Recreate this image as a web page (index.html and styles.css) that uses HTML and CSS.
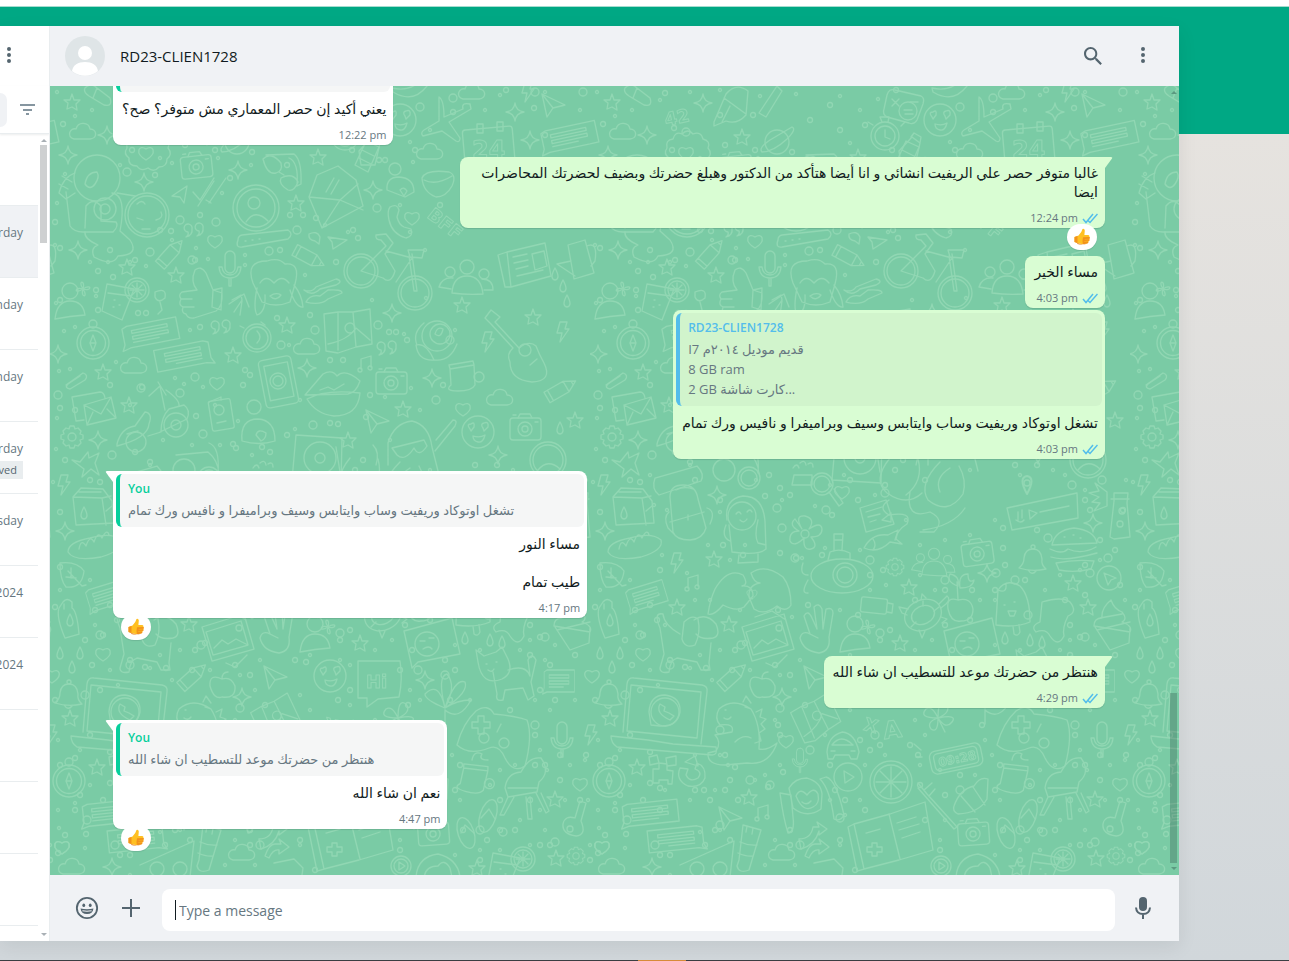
FILE: index.html
```
<!DOCTYPE html>
<html lang="en">
<head>
    <meta charset="utf-8">
    <title>WhatsApp</title>
    <link rel="stylesheet" href="styles.css">
</head>
<body>
<div class="top-strip"></div>
<div class="green-band"></div>

<div class="app">
    <!-- chat list -->
    <aside class="sidebar">
        <div class="sidebar-header">
            <button class="icon-button" aria-label="Menu">
                <svg width="24" height="24" viewBox="0 0 24 24"><path fill="currentColor" d="M12 7a2 2 0 1 0 0-4 2 2 0 0 0 0 4zm0 2a2 2 0 1 0 0 4 2 2 0 0 0 0-4zm0 6a2 2 0 1 0 0 4 2 2 0 0 0 0-4z"/></svg>
            </button>
        </div>
        <div class="sidebar-search">
            <input class="search-box" type="text" aria-label="Search">
            <button class="icon-button filter" aria-label="Filter">
                <svg width="20" height="20" viewBox="0 0 20 20"><path stroke="currentColor" stroke-width="2" d="M2 5h15M5 10h9M8 14h3"/></svg>
            </button>
        </div>
        <div class="chat-list">
            <div class="chat-row"></div>
            <div class="chat-row selected"><span>rday</span></div>
            <div class="chat-row"><span>nday</span></div>
            <div class="chat-row"><span>nday</span></div>
            <div class="chat-row"><span>rday</span><span class="chip">ved</span></div>
            <div class="chat-row"><span>sday</span></div>
            <div class="chat-row"><span>2024</span></div>
            <div class="chat-row"><span>2024</span></div>
            <div class="chat-row"></div>
            <div class="chat-row"></div>
            <div class="chat-row"></div>
            <div class="scrollbar list-scrollbar"><i class="arrow-up"></i><i class="thumb"></i><i class="arrow-down"></i></div>
        </div>
    </aside>

    <main class="chat">
        <header class="chat-header">
            <svg class="avatar" width="40" height="40" viewBox="0 0 40 40">
                <circle cx="20" cy="20" r="20" fill="#dfe5e7"/>
                <circle cx="20" cy="17" r="7" fill="#fff"/>
                <path fill="#fff" d="M7 35c1-6 6-9 13-9s12 3 13 9a20 20 0 0 1-26 0z"/>
            </svg>
            <h1>RD23-CLIEN1728</h1>
            <button class="icon-button" aria-label="Search">
                <svg width="24" height="24" viewBox="0 0 24 24"><path fill="currentColor" d="M15.900 14.300H15l-.3-.3c1-1.100 1.600-2.700 1.600-4.300 0-3.700-3-6.700-6.700-6.700S3 6 3 9.700s3 6.700 6.700 6.700c1.600 0 3.200-.6 4.300-1.600l.3.3v.8l5.100 5.100 1.500-1.500-5-5.200zm-6.200 0c-2.600 0-4.600-2.100-4.600-4.600s2.100-4.600 4.600-4.600 4.600 2.100 4.600 4.600-2 4.600-4.600 4.600z"/></svg>
            </button>
            <button class="icon-button" aria-label="Menu">
                <svg width="24" height="24" viewBox="0 0 24 24"><path fill="currentColor" d="M12 7a2 2 0 1 0 0-4 2 2 0 0 0 0 4zm0 2a2 2 0 1 0 0 4 2 2 0 0 0 0-4zm0 6a2 2 0 1 0 0 4 2 2 0 0 0 0-4z"/></svg>
            </button>
        </header>

        <section class="conversation">
            <!-- doodle wallpaper, one 540px tile repeated sideways -->
            <svg class="wallpaper" width="100%" height="100%" aria-hidden="true">
                <defs>
                    <marker id="dot1" markerUnits="userSpaceOnUse" markerWidth="8" markerHeight="8" refX="4" refY="4" viewBox="0 0 8 8"><circle class="ring" cx="4" cy="4" r="1.500"/></marker>
                    <marker id="dot2" markerUnits="userSpaceOnUse" markerWidth="10" markerHeight="10" refX="5" refY="5" viewBox="0 0 10 10"><circle class="ring" cx="5" cy="5" r="2.500"/></marker>
                    <marker id="dot3" markerUnits="userSpaceOnUse" markerWidth="12" markerHeight="12" refX="6" refY="6" viewBox="0 0 12 12"><circle class="ring" cx="6" cy="6" r="4"/></marker>
                    <g id="spark"><path d="M0-9Q1-1 9 0Q1 1 0 9Q-1 1-9 0Q-1-1 0-9Z"/></g>
                    <g id="star"><path d="M0-8L2-2L8-2L4 2L5 8L0 5L-5 7L-4 1L-8-2L-2-2Z"/></g>
                    <g id="heart"><path d="M0 7C-12 0-7-9 0-4C7-9 12 0 0 7Z"/></g>
                    <g id="drop"><path d="M0-6Q6 5 0 6Q-6 5 0-6Z"/></g>
                    <g id="bolt"><path d="M-3-10H4L2-3H6L-3 10L-1 1H-6Z"/></g>
                    <g id="cloud"><path d="M-9 7C-17 5-13-5-7-3C-5-11 6-10 7-3C14-3 15 6 7 7Z"/></g>
                    <g id="cross"><path d="M0 0C-6-9 3-9 0 0C9-6 9 3 0 0C6 9-3 9 0 0C-9 6-9-3 0 0Z"/></g>
                    <g id="quote"><path d="M-3-2a4 4 0 1 0-4 3q1 3-2 5q7-2 6-8ZM8-3a4 4 0 1 0-4 3q1 3-2 5q7-2 6-8Z"/></g>
                    <g id="note"><path d="M-5 5V-5L5-8V3"/><circle cx="-6" cy="6" r="2"/><circle cx="4" cy="4" r="2"/></g>
                    <g id="gear"><circle r="4"/><path d="M-3-8L-2-11H2L3-8L6-9L9-6L8-3L11-2V2L8 3L9 6L6 9L3 8L2 11H-2L-3 8L-6 9L-9 6L-8 3L-11 2V-2L-8-3L-9-6L-6-9Z"/></g>
                    <g id="camera"><rect x="-15" y="-10" width="31" height="22" rx="3"/><path d="M-7-10L-5-14H5L7-10M10-6H13M-12-13H-9"/><circle cy="1" r="7"/><circle cy="1" r="3"/></g>
                    <g id="compass"><circle r="16"/><circle r="12.500"/><circle cy="-19" r="4"/><path d="M0-8L3 0L0 8L-3 0ZM-3 0H3"/></g>
                    <g id="bubble"><path d="M-22-10H28V12H-22L-30 14L-27 8V-8Z"/><path d="M-18-5H18v3H-18ZM-18 1H18v3H-18ZM-18 7H8"/></g>
                    <g id="pencil"><path d="M-15-6H7L18 0L7 6H-15ZM-11-6V6M7-6V6M14-2V2"/></g>
                    <g id="mic"><rect x="-5" y="-17" width="10" height="22" rx="5"/><path d="M-11-1q1 11 11 11t11-11h-3q-1 8-8 8t-8-8ZM-1 10V18H1V10"/></g>
                    <g id="person"><circle cy="-13" r="8"/><path d="M-15 15Q-13-3 0-3T15 11Q0 12-15 15Z"/></g>
                    <g id="people"><circle cy="-14" r="7"/><path d="M-15 12Q-14-5 0-5T16 13Q0 14-15 12Z"/><circle cx="-17" cy="-9" r="5"/><circle cx="17" cy="-7" r="5"/><path d="M-16 8L-28 6Q-25-4-14-3M15-2Q26-2 26 9L17 9"/></g>
                    <g id="plane"><path d="M-11-11L12 0L0 3L-6 12ZM-11-11L0 3"/></g>
                    <g id="bell"><path d="M-13 8Q-8 4-8-2Q-7-11 1-11T10-1Q9 5 14 9Q0 12-13 8ZM-4 10q4 6 8 1"/><circle cx="1" cy="-13" r="2"/></g>
                    <g id="citrus"><circle r="12"/><circle r="9"/><path d="M0-7V7M-7 0H7M-5-5L5 5M5-5L-5 5"/></g>
                    <g id="drink"><path d="M-19-13L8-8L-4 23L-24 14ZM-18-4L5-1M-12 3h1M-7 8h1M-13 10h1"/><use href="#citrus" x="11" y="-7"/></g>
                    <g id="face"><circle r="16"/><path d="M-8-3q-4-5 1-5q4-3 3 3l-3 4ZM5-4q-3-4 1-5q5-2 4 4l-4 4ZM-5 4Q2 6 7 3Q5 11 0 10T-5 4Z"/></g>
                    <g id="map"><path d="M-24-16L-10-18L5-18L22-21L24 14L8 17L-10 23L-22 21ZM-10-18V20M5-18L8 17"/><path d="M-20 14Q0 10 8-2L22 10"/><circle r="5" cx="2" cy="-2"/></g>
                    <g id="mug"><path d="M-12-8L12-12L13 8Q10 14-4 14T-11 8ZM-12-8L-13-12L11-16L12-12"/><circle cx="17" cy="0" r="5"/></g>

                    <g id="doodles">
                        <!-- first band -->
                        <use href="#star" x="72" y="102"/><use href="#cloud" x="83" y="132"/><use href="#spark" x="107" y="135"/>
                        <path d="M85 88q6-6 12 0l13 10q3 9-6 7l-15-9q-6-4-4-8ZM97 88l-4 10"/>
                        <text x="124" y="124" transform="rotate(-12 135 115)">42</text>
                        <use href="#spark" x="163" y="103"/><use href="#star" x="202" y="137"/>
                        <path d="M174 122l12-28q10-12 22-3l-2 24q-9 10-20 6l-12 5ZM184 98l22 16M190 106l-8 16M219 113l18-27 5 5-16 26Z"/>
                        <circle cx="237" cy="142" r="12"/><path d="M222 152q-4-4 8-12l22-13q5 2-5 12-14 13-25 13Z"/>
                        <path d="M127 148q-2-8 6-9 2-8 9-5 6-6 11 0 8-3 10 5 8 2 5 9 5 6-1 11 0 8-8 8-5 6-11 1-7 4-11-2-9 0-8-8-6-4-2-10Z"/><use href="#heart" x="146" y="153"/>
                        <path d="M347 95q2-7 8-5l26 6q4 2 2 8l-6 16q-3 5-8 3l-22-6q-5-3-3-8ZM352 99l7 7m0-7l-7 7M370 102h8"/><circle cx="368" cy="111" r="9"/><path d="M364 110h8M365 114h8"/>
                        <path d="M392 88q17 4 28-7l7 5q-14 18-34 6Z"/>
                        <circle cx="345" cy="136" r="14"/><circle cx="345" cy="136" r="10"/><path d="M345 130v7l5 2M342 122l-2-5h9l-1 5M333 125l-5-3M361 126l4-4"/>
                        <path d="M372 137l8 6-5 22h-14l-2-14ZM371 137l3-4 7 4-1 6"/>
                        <use href="#face" x="400" y="120"/>
                        <path d="M439 97q5 3 5 20l19-8q-2-7 7-5l1 5-22 13 11 16q0 5-4 3l-14-10-19 5q-3-3 1-6l15-9Z"/>
                        <use href="#cloud" x="472" y="92"/><use href="#bolt" x="528" y="92"/><use href="#spark" x="515" y="112"/><use href="#spark" x="530" y="140"/><use href="#plane" x="553" y="105"/>
                        <rect x="464" y="128" width="50" height="46" rx="3" transform="rotate(-5 489 150)"/><path d="M477 124h6v9h-6ZM497 122h6v9h-6Z"/><text x="472" y="158" class="big">24</text>
                        <use href="#bubble" transform="translate(569 136) rotate(-12)"/>
                        <use href="#cloud" x="430" y="152"/>

                        <!-- astronaut and moon -->
                        <circle cx="97" cy="178" r="23"/><path d="M85 184q2-12 12-12 3 5-2 12-5 7-10 0ZM75 173q-12 4-16 20l7 6 9-6M62 176l10 6M59 184l9 5M66 192l4 34q4 6 13 6h30q6-6 3-10l-15-1v-15q-8-9-15 0l-1 22"/>
                        <circle cx="105" cy="209" r="11"/><circle cx="105" cy="209" r="5"/><path d="M112 193q15 2 8 38l10 9q10 15-12 16-5 11-24 1-4-9 4-12-14-6-13-13M117 193l18 3"/>
                        <circle cx="147" cy="215" r="22"/><circle cx="147" cy="215" r="19"/><path d="M137 204q5-5 8 0M142 229h8M156 220q8-2 5-8M137 218l6 2"/>
                        <use href="#spark" x="68" y="155"/><use href="#spark" x="144" y="182"/><use href="#camera" transform="translate(196 166) rotate(-6)"/>
                        <use href="#spark" x="238" y="170"/><use href="#star" x="318" y="157"/>
                        <path d="M263 159q8-8 18 4 2 8-5 10-9 2-13-14ZM281 178q12-6 17 4-4 10-10 8-10-6-7-12ZM279 172l5 3M266 155l28-1q8 6 7 30l-4 2q2-24-8-28"/>
                        <path d="M172 196l15-10-3 17-4-6ZM193 192l7 8 14-22M198 206l16-25M209 203l17-25M206 200l5 3"/>
                        <circle cx="256" cy="208" r="23"/><circle cx="256" cy="208" r="19"/><circle cx="254" cy="203" r="6"/><path d="M246 222q9-14 22-1"/>
                        <use href="#star" x="296" y="203"/><path d="M309 197l8-22 21-9 18 14 7 26-41 22ZM309 197l31 3 18-16M340 200l23 10M340 200l-18 28M326 192l8-14M331 194l8-14"/>
                        <use href="#spark" x="373" y="190"/><circle cx="395" cy="169" r="6"/><path d="M387 190q-1-13 12-13 15 1 15 15l-9 5ZM400 190q4-4 7 1l-3 5Z"/>
                        <path d="M355 165l11-24 13 6-11 25ZM362 150l12 6M359 158l12 6"/>
                        <path d="M422 178q4-9 27-6 8 3 3 14-6 11-16 11-13-5-14-19ZM424 180q12 6 28-4"/>
                        <text x="430" y="218" transform="rotate(38 430 212)">BFF</text>
                        <path d="M390 207q7-4 9 3l-2 7q2 8 7 10l7 2q3 7-5 9-14-4-17-18-2-9 1-13Z"/><use href="#heart" x="412" y="218"/>
                        <use href="#quote" x="195" y="231"/><use href="#heart" x="215" y="241"/>
                        <path d="M238 240q-3 8 4 7l46-8q6-5 0-9l-46 5q-4 1-4 5ZM245 241h1M252 240h1M259 239h1"/>
                        <path d="M309 234q8-4 11 3l-1 7-4-3q-7-1-6-7Z"/><path d="M328 237l19 3-14 9-1-7Z"/>
                        <use href="#pencil" transform="translate(170 254) rotate(-48)"/><use href="#pencil" transform="translate(308 257) rotate(28)"/>
                        <use href="#spark" x="78" y="250"/><use href="#star" x="127" y="267"/><use href="#star" x="176" y="275"/><use href="#mic" x="230" y="268"/>

                        <!-- monkey, thumb, bike -->
                        <path d="M253 283q-8-22 14-22 12-4 18 3 16-2 10 20l-5 18q-14 6-28 0ZM260 283q6-9 14 0 8-9 15 0M270 296q6-4 11-1-5 7-11 1ZM257 288q-4 20 0 27 9-3 8-20M290 290q6 18 13 17-1-12-9-22"/>
                        <path d="M195 270q-5 12 2 20l-15 2q-4 3-1 7-3 6 2 8-2 6 3 7 2 5 8 4l22-7q7-5 6-18l-9-3-7-17q-5-8-11-3ZM213 290l9-2-1 22-9-3ZM181 299h11M183 307h11"/>
                        <circle cx="361" cy="271" r="17"/><circle cx="361" cy="271" r="14"/><circle cx="415" cy="293" r="17"/><circle cx="415" cy="293" r="14"/>
                        <path d="M361 271l25-25-5-6q-6 0-5-5l10-1 7 9-8 11 10 17q-4 14-12 7ZM386 251l26 7-16 24M409 256l5 35h3l-5-37M408 250h16l-2 8-12-1Z"/>
                        <use href="#people" x="467" y="281"/>
                        <path d="M507 252l38-9 6 33-40 11ZM507 252l-9 3 7 32 6 0M513 257l14-3M514 263l14-3M516 269l12-3M532 254l12-3 3 15-12 4ZM517 276l26-6"/>
                        <path d="M568 245l17-5 9 33-20 6ZM571 261l-14 3 18 12M587 246q11-5 8 15l-4 5"/>
                        <use href="#drop" x="555" y="274"/><use href="#drop" x="563" y="286"/><use href="#drop" x="567" y="301"/>
                        <use href="#drink" x="126" y="297"/><use href="#cross" x="83" y="289"/><use href="#person" x="70" y="304"/>
                        <path d="M155 292q12-5 10 6-7 6-10-1ZM160 302l2 8-4 4"/>
                        <path d="M229 304l15-10 5 13M232 300l9-5 1 5-8 12M240 315l2-14"/>
                        <path d="M304 290q8 3 12-3l20-8q8 2 0 6l-16 4q-8 8-16 1ZM306 302q4-8 14-6l8-6q14-1 14 3l-14 6q-8 7-22 3Z"/>
                        <use href="#map" x="348" y="330"/><use href="#spark" x="392" y="313"/><use href="#star" x="462" y="305"/><use href="#star" x="533" y="317"/><use href="#bolt" x="563" y="332"/><use href="#bolt" x="488" y="342"/>
                        <use href="#bubble" transform="translate(150 332) rotate(-11)"/><use href="#bubble" transform="translate(183 355) scale(-1 1) rotate(11)"/>
                        <use href="#compass" x="93" y="343"/><use href="#quote" x="222" y="328"/><circle cx="257" cy="338" r="14"/><circle cx="257" cy="338" r="11"/><path d="M257 331q6 6 0 12M261 322l4 3M244 328l-4-2"/>
                        <use href="#star" x="287" y="325"/><use href="#cloud" x="307" y="347"/><use href="#star" x="233" y="355"/><use href="#cloud" x="134" y="366"/><use href="#star" x="103" y="372"/>
                        <path d="M66 385l17-12q6 2 2 7l-15 9q-6-1-2-5l12-8"/><use href="#spark" x="58" y="354"/>
                        <rect x="262" y="358" width="33" height="48" rx="4" transform="rotate(-11 278 382)"/><rect x="267" y="364" width="24" height="35" transform="rotate(-11 278 382)"/><circle cx="278" cy="381" r="8"/><circle cx="278" cy="381" r="5"/>
                        <use href="#spark" x="307" y="368"/><path d="M305 395l18-21q9-5 14 2 8-8 23 5-4 12-12 13ZM307 399q18-10 53-6-2 23-26 23-18-2-27-17ZM320 390l8-3 6 3 10-6"/>
                        <use href="#note" x="366" y="364"/><use href="#quote" x="388" y="349"/><use href="#camera" x="391" y="382"/><use href="#spark" x="432" y="378"/><use href="#mug" x="462" y="377"/>
                        <circle cx="437" cy="336" r="15"/><circle cx="440" cy="334" r="10"/><path d="M435 334q2-8 8-5-2 10-8 5ZM416 345q10-3 18 15-16 1-18-15ZM424 323q-12 10-7 22M434 360q16 2 23-16"/>
                        <path d="M485 318l6-8 9 7-5 5 24 26q10-8 17-2 3 8 8 17 9 18-12 19-22-2-22-20-4-8 3-14l-22-24Z"/><circle cx="525" cy="350" r="6"/><path d="M530 365l7-6"/>
                        <use href="#heart" x="217" y="383"/>

                        <!-- scooter band -->
                        <path d="M72 397l28-5q4 0 5 6M72 397l4 24 8-1M84 405l27-8 5 21-29 7ZM84 405l17 9 10-17M93 412l-6 13M107 409l9 9"/><use href="#star" x="129" y="405"/>
                        <path d="M117 444q4-16 18-18l10-14q8 1 4 12-1 14-32 22ZM148 436l13-4q0-15 8-23l15-4q7 5 3 14l-27 13M165 410l-5-24-11 10M158 382l8 13M166 390q14 10 13 16"/><circle cx="176" cy="425" r="12"/><circle cx="176" cy="425" r="5"/><circle cx="136" cy="442" r="10"/><path d="M127 434l11-3"/>
                        <rect x="210" y="400" width="22" height="30" rx="2" transform="rotate(-9 220 413)"/><circle cx="219" cy="410" r="5"/><path d="M217 423l9-2M209 402l12-5v3"/>
                        <circle cx="254" cy="407" r="7"/><path d="M242 441q-2-22 16-22 17 1 17 22-16 5-33 0ZM256 435q2-7 10-2 0 6-5 8Z"/>
                        <use href="#star" x="403" y="409"/><use href="#plane" x="377" y="421"/><use href="#gear" x="72" y="437"/><use href="#spark" x="98" y="440"/><use href="#star" x="348" y="440"/>
                        <path d="M88 452l-8 10-8-2 12 9-2 8 9-8 8 6-4-12 4-10-10 5Z"/>
                        <path d="M296 435l46 3-1 45-49-3Z"/><circle cx="320" cy="458" r="16"/><circle cx="320" cy="458" r="5"/><path d="M336 447l4 25"/>
                        <path d="M388 465v-22q6-20 24-22 17 4 20 26l6 24M392 448l32-8 3 6q-8 12-13 2-9 14-17 7ZM436 440l17-20q5 0 2 6l-20 25M373 445q7 7 3 20"/>
                        <path d="M176 455l32-3q10 8 11 22M209 443q11 4 9 30"/><circle cx="184" cy="470" r="11"/><circle cx="209" cy="478" r="11"/><circle cx="209" cy="478" r="8"/>
                        <use href="#cloud" x="500" y="398"/><use href="#pencil" transform="translate(560 390) rotate(-30)"/><use href="#star" x="575" y="420"/><use href="#face" x="478" y="432"/><use href="#camera" x="525" y="428"/><use href="#heart" x="463" y="409"/><use href="#spark" x="498" y="455"/><use href="#drop" x="560" y="428"/>
                        <path d="M253 468q4-6 6 0M260 463q5-4 6 2M268 464q5-3 5 3M254 475h18v10h-20Z"/><circle cx="282" cy="484" r="11"/><circle cx="282" cy="484" r="8"/><path d="M289 492l10 14 4-3-9-14"/>
                        <path d="M350 458q-18 22-3 35 20 14 35 0M366 495q18-14 12-36M349 500q-12 8 0 15 24-4 18 9-10 6-12 16M370 492q-5 28 20 20 16 8 4 20h-14M400 462q-22 22-12 38 20 16 35-6 4-14-4-28M410 468q-16 10-10 24M425 508q-12 18-42 22"/>
                        <use href="#drop" transform="translate(487 485) rotate(180) scale(1.500)"/><circle cx="487" cy="483" r="3"/>
                        <circle cx="548" cy="460" r="18"/><circle cx="548" cy="460" r="15"/><path d="M538 470q10-12 22-1"/>

                        <!-- backpack band -->
                        <use href="#bolt" x="64" y="485"/><path d="M73 497l8-9 22 1 9 12 2 22-38 2ZM73 497l29 1 4 27M102 498l9-2M79 492h22M106 511l6-5"/><use href="#drop" x="84" y="513"/>
                        <path d="M115 478l42-12q8 8 4 15l-42 14q-8-6-4-17Z"/><path d="M130 497q0-12 13-12t15 14l8 29q-3 11-16 12-14 0-17-8ZM130 522l34-10M129 512q-6 5-1 16l6 6M167 508q9 3 3 16M148 515v5M136 490q8-4 17-1"/>
                        <circle cx="202" cy="516" r="14"/><path d="M187 520q-3-21 16-24 20 0 22 25l1 28q-8 7-34 3l-3-27M196 514q3-4 5 0M207 512q3-4 5 0M200 520q4 4 7-1M186 525q-5 12 4 16M199 555l-1 8 20-1v-8M218 520q-4 16 0 23l8 2"/>
                        <use href="#spark" x="177" y="495"/><use href="#heart" x="302" y="492"/><use href="#spark" x="65" y="531"/>
                        <path d="M68 552q0-10 22-14 22-6 31 2 3 10-20 17-27 5-33-5ZM79 549q2-11 7-3 4-12 8-4 4-12 8-4 5-10 7-3"/>
                        <circle cx="265" cy="534" r="4"/><path d="M262 529q-8-14 3-13 11 3 4 13 12-8 13 0 0 8-11 8 8 10 0 12-8 2-7-11-10 10-14 3-1-10 9-10-11-6-4-12Z"/>
                        <ellipse cx="302" cy="576" rx="31" ry="17"/><circle cx="305" cy="575" r="12"/><circle cx="305" cy="575" r="8"/><path d="M288 560l2-8q10-4 20 1v6M294 551v-17h9l-1 16M294 540h8M268 575q-9 0-5-12M268 580q-8 14 0 13"/>
                        <path d="M324 548q8-15 24-13l10-5-2 9 6 5-12-2q-12 12-26 6ZM333 539q4 6 0 11"/><path d="M320 508l26-8 8 24-28 8ZM326 512l16-5M328 517l12-3M330 522l6-2M342 520l9-7v9Z"/>
                        <use href="#gear" transform="translate(355 567) scale(.8)"/><use href="#people" transform="translate(394 565) scale(.8)"/><use href="#star" x="369" y="587"/><use href="#camera" transform="translate(437 553) rotate(-8)"/>
                        <path d="M467 508l70-15 1 25-66 12ZM489 510l8 3-7 6ZM500 512l29-6M478 512v9M482 510v8M476 520q5 4 8 0"/>
                        <use href="#bell" x="492" y="560"/><path d="M512 545q3-15 22-17 20 2 23 15ZM510 549q12 6 18 0 14 6 28-2M511 557q14 5 46-4M516 563q20-4 38-2l-3 8q-16 4-32 1ZM524 537h1M533 535h1M540 538h1"/>
                        <use href="#spark" x="553" y="523"/><path d="M574 493h14l-1 10 3 34-16 2-4-2 4-36ZM571 499h18M555 483l12 9v14l-13 5 6-8-8-1 7-5-10-4 10-2Z"/><circle cx="582" cy="511" r="3"/><circle cx="580" cy="524" r="3"/>
                        <use href="#bolt" x="137" y="563"/><use href="#star" x="174" y="559"/><path d="M60 563q17-2 24 8-2 18-18 16-6-7-6-24ZM68 571l14 15 4-1M71 568v10M66 577l10 1"/>
                        <use href="#bubble" transform="translate(106 595) rotate(-17) scale(.7 1)"/><use href="#note" x="153" y="583"/><use href="#star" x="137" y="607"/>
                        <path d="M204 607q-8 5-21-2-9 11-15 9 2-14 7-25 13-22 28-14 6 10-1 11 11-1 11 10ZM214 609q10 7 23-3 9 7 14-1 0-18-8-28-18-14-32-4 3 10 9 10-12 2-11 14Z"/><use href="#heart" transform="translate(212 594) scale(.7)"/>
                        <path d="M63 602q4-5 9 0v6q5 3 7 26l-14 4q-9-21-6-30ZM64 604v5"/><use href="#drop" x="70" y="620"/>
                        <path d="M154 620q12-8 22 4 5 12-3 14-12 2-17-4M144 622q8-8 14-3 3 14-3 26-10 4-13-6ZM140 634q-16-9-17-20-10-2-3 14l4 26-4 14q0 6 9 4 1-12 8-14l20 4 4 8h9l-1-7 2-20"/>
                        <use href="#star" x="189" y="624"/><path d="M202 627l42-13 10 35-42 12ZM206 632l35-11 7 24-35 10ZM214 648l8-8 6 4 8-5 12 6M215 617l17-6 14 9M247 655l-12 12-9-4"/><circle cx="239" cy="628" r="3"/>
                        <path d="M270 634l-6-18q4-7 8 2l5 11-3-22q5-5 8 2l1 20 3-20q7-2 7 4l-4 24q2 14-10 16-16-2-19-15 2-8 10-4l8 4"/>
                        <use href="#person" x="315" y="637"/><use href="#cross" x="328" y="627"/><use href="#star" x="360" y="643"/>
                        <ellipse cx="383" cy="615" rx="19" ry="15" transform="rotate(-25 383 615)"/><ellipse cx="383" cy="615" rx="12" ry="9" transform="rotate(-25 383 615)"/><path d="M399 604l8-8q4 3-1 8l-5 4M368 609l-9-2 3 6 5 2M379 630l3 8 3-7M381 600l1-6 4 4M401 617l6 2-5 4M383 606v-5M394 611l5-4M376 622l-5 5"/>
                        <rect x="321" y="598" width="26" height="15" rx="2" transform="rotate(6 334 605)"/><path d="M348 603l5 1-1 9-5-1"/>
                        <use href="#spark" x="447" y="573"/><path d="M418 600q-12-4-10 9 3 14 13 12 12 0 12-12-2-12-15-9ZM418 600l-1-18M418 586q-12-4-8-12 10 2 8 12ZM420 588q-2-14 8-14 0 10 6 6-1 8-14 8Z"/>
                        <path d="M456 622l2-32q8-12 22-4 10 10 10 36-14 6-34 3ZM458 590q9 4 8-6M473 626l1 8q4 3 6-2l-1-7M464 605h1M474 602h1M468 611h8l-2 5h-4Z"/>
                        <use href="#star" x="533" y="583"/><circle cx="569" cy="578" r="12"/><path d="M564 573l12 5-5 2-3 5Z"/>
                        <path d="M502 602q20-6 28 0 8 10-2 14-6 12-4 20-6 12-14 0-4-8-14-4-6-6 4-10Z"/><use href="#star" x="548" y="607"/>
                        <path d="M554 626q0-8 8-8-1-10 9-18 3 9 11 12 6 7 0 10 11 4 8 10ZM555 627l15 23 19-7 1-15M560 618l22-4M557 630l33-8"/>
                        <path d="M404 631l48-13 8 36-42 8-6 6-1-5Z"/><circle cx="427" cy="644" r="12"/><path d="M420 641h5M429 638h5M423 649q6-4 9 0"/>
                        <use href="#drop" x="490" y="640"/><use href="#drop" x="502" y="642"/><use href="#drop" x="465" y="638"/>

                        <!-- laptop band -->
                        <use href="#drop" x="60" y="653"/><use href="#drop" x="80" y="653"/><use href="#drop" x="72" y="667"/><use href="#heart" x="103" y="654"/><use href="#heart" x="592" y="676"/><use href="#bell" x="68" y="695"/>
                        <path d="M87 684q1-7 7-6l68 7q6 1 5 7l-6 52M87 684l-4 48M91 685l70 7-4 46-70-7ZM71 736l37 4 25 4 43 3q2 8-4 8l-95-8q-6-4-6-11Z"/><circle cx="125" cy="712" r="14"/><path d="M111 725l-2-13q1-17 16-17 16 2 15 17-3 15-20 14ZM120 704q-5 9 10 16l4-4-5-3-5-2 1-4Z"/>
                        <use href="#pencil" transform="translate(192 677) rotate(-42)"/><path d="M222 679q-13-6-12 7 4 14 12 11 14 2 13-11-4-10-13-7ZM222 679q0-7 6-7"/>
                        <path d="M175 735l17-3q3-9-12-7-6-7-1-16 14-12 32 0 10 16 8 40 8 2 18-6-8 23-30 20l-22 2q-18 0-17-12l8-2q6-9-1-16ZM185 710h1M205 707l6 2M184 718q4 3 7-1M195 742q8-8 16-4M216 712l6-3-2 8 6 2-5 5 4 5-6 4 2 8-6 2M203 702l3-6 5 7"/>
                        <use href="#plane" x="275" y="677"/><use href="#spark" x="242" y="697"/><use href="#map" transform="translate(276 718) rotate(-22) scale(.9)"/>
                        <use href="#face" x="330" y="676"/><path d="M358 661h42q3 18-1 36l-21 2-11 8v-9h-9Z"/><text x="366" y="688">Hi</text><use href="#spark" x="425" y="680"/>
                        <path d="M445 708q-20-8-20-14 14-14 20 14-8-32 2-34 10 12-2 34 10-30 20-26 4 10-20 26q12-8 26-8-12 22-26 10M445 710v14"/>
                        <path d="M478 662l-2-12 8 6 12-4 6-5 6 12q6 14-6 20-20 8-24-17ZM486 664h1M496 662h1M488 670q4 3 6-1M508 670q18-6 22 6l-2-16q4-8 8 0l-5 22 3 14-6 4-5-12-18 2-2 10q-8 2-6-6l-4-22"/>
                        <use href="#bubble" transform="translate(559 680) scale(.55 1)"/><use href="#star" x="70" y="718"/><use href="#heart" x="246" y="741"/><use href="#mic" transform="translate(260 760) scale(.7)"/>
                        <path d="M287 752q1-16 15-20 13 1 17 20l-2 7h-6l-2-4h-14l-2 4h-5ZM292 745q9-12 21 0ZM291 751h4M311 751h4"/>
                        <text x="325" y="732" transform="rotate(15 332 722)">X</text><text x="343" y="738" class="big" transform="rotate(-8 352 730)">A</text>
                        <path d="M398 718q-20 0-12-9 6-4 12 9 0-20 8-14 6 8-8 14 20-4 14 4-6 8-14-4 0 16-7 11-5-7 7-11ZM398 718l7 14"/>
                        <rect x="390" y="747" width="52" height="23" rx="6" transform="rotate(-12 416 758)"/><rect x="394" y="750" width="44" height="17" rx="4" transform="rotate(-12 416 758)"/><text x="398" y="763" class="small" transform="rotate(-12 416 758)">09:28</text><path d="M374 744l7 6M376 757h6"/>
                        <path d="M457 745q6-22 19-34 12-8 18 3 22 2 33 6 6 16-2 46-12 8-20-8-6-14-16-10-20 8-32-3ZM478 716h6v6h6v6h-6v6h-6v-6h-6v-6h6Z"/><circle cx="484" cy="738" r="5"/><circle cx="504" cy="743" r="5"/><path d="M497 732l4-8"/>
                        <use href="#mic" x="562" y="739"/><use href="#bolt" x="591" y="735"/><use href="#compass" x="69" y="781"/><use href="#star" x="97" y="767"/>
                        <path d="M109 757l8-2 2 8-9 2ZM126 758l10-2v9l-9 1ZM119 763l8 1v6l6 1-1 13h-4v-4h-9v3h-6v-14h6Z"/><path d="M140 768q-5 12 8 18 13 2 17-8 1-12-8-15l-2 6q8 3 3 9-8 5-12-3l2-6ZM145 762l10-6 3 10Z"/>
                        <circle cx="308" cy="777" r="14"/><path d="M304 771l10 6-9 6Z"/><circle cx="351" cy="782" r="21"/><circle cx="351" cy="782" r="17"/><path d="M351 767v30M336 782h30M340 771l22 22M362 771l-22 22"/>
                        <path d="M249 788q6-10 18-10 14 4 15 16l-1 15q-14 10-28-1ZM256 796q4-9 11-1 7-9 11-1 2 10-5 13-10 6-17-11ZM262 802q5 4 9-1M240 793q3 24 8 40 7-1 5-16l-2-22ZM280 779q10 10 14 40 6 3 10-4-8-36-18-38Z"/>
                        <use href="#mug" transform="translate(473 779) rotate(16)"/><path d="M472 760q2-10 10-6-4 6 6 6"/>
                        <path d="M505 788q2-15 16-16 8-16 20-14 10 14-2 24l-2 10-29 5ZM508 788h30M514 797l-10 18h-4l8-18M526 797l2 22h4l-2-22M536 793l10 20 3-2-8-18"/>
                        <use href="#heart" x="580" y="784"/><use href="#star" x="555" y="799"/><path d="M580 801l6 2-5 18q6 14-5 15-14-2-13-12 2-9 12-6Z"/><circle cx="570" cy="829" r="3"/>
                        <path d="M414 806q6-17 20-20 6-10 14-7l-1 20q-8 14-29 15-6-3-4-8ZM421 796l14 16M433 787l12 18M378 783l9 11 30 33-3 2-36-41M384 790l8-7M389 796l6-7"/>
                        <use href="#star" x="209" y="797"/><use href="#bubble" transform="translate(110 812) rotate(-6)"/><use href="#bubble" transform="translate(136 838) rotate(-6) scale(-1 1)"/><use href="#plane" x="190" y="818"/><use href="#note" x="223" y="813"/>
                        <path d="M203 825l18 5-12 40q-10 4-12-4l2-6ZM200 842q9 4 17 3M198 853q9 4 15 3M207 826l-1 6M213 828l-1 6"/>
                        <path d="M259 839q12 0 14-12h6l-2-5 10 7-8 6v-4q-4 14-18 18ZM265 856q4-12 10-12h6l-2-5 10 8-10 7v-4q-6-1-10 8Z"/>
                        <path d="M314 824l36-10 35-12 8 48-34 10-35 9ZM349 814l11 45M314 824l-6 3 9 44 7-2M326 833l14-4M357 823l19-6M359 830l20-6M362 838l18-6"/><path d="M332 843h5v4h5v5h-5v4h-5v-4h-5v-5h5Z"/>
                        <use href="#camera" transform="translate(433 833) rotate(-4)"/><ellipse cx="466" cy="833" rx="8" ry="16" transform="rotate(-18 466 833)"/><ellipse cx="488" cy="816" rx="8" ry="17" transform="rotate(18 488 816)"/><path d="M461 833l4-8 9 8M481 818l8-9 6 10"/>
                        <use href="#heart" x="602" y="847"/><use href="#heart" x="62" y="847"/><use href="#star" x="556" y="858"/><use href="#gear" transform="translate(576 856) scale(.8)"/><use href="#drink" transform="translate(512 866)"/>
                        <path d="M416 885q-2-28 22-31 24 6 22 31M424 880q0-14 14-14 6-8 12 2l3 14"/><circle cx="401" cy="866" r="10"/><circle cx="401" cy="866" r="7"/><path d="M399 862l6 4-6 4Z"/>
                        <path d="M274 863l20-4 9 9-2 14M140 865l54-24-4 36"/><circle cx="157" cy="869" r="7"/><circle cx="180" cy="869" r="7"/><use href="#cloud" x="242" y="853"/><use href="#cloud" x="72" y="867"/><use href="#spark" x="112" y="867"/><use href="#star" x="477" y="868"/>

                        <!-- loose rings, one per vertex -->
                        <path class="dots" marker-mid="url(#dot1)" d="M0 0L57 92L75 116L92 110L120 100L150 92L180 90L220 96L256 94L300 96L320 110L338 99L410 142L430 130L485 110L500 95L545 92L580 110L65 174L120 165L160 158L172 163L218 158L222 193L251 165L310 143L413 162L400 205L57 203L55 245L172 240L196 248L245 255L325 225L348 232L410 232L425 250L90 262L108 262L130 262L146 266L208 259L245 265L305 275L372 300L426 298L455 330L56 303L96 296L64 331L75 327L190 330L289 345L404 334L59 371L70 369L116 362L175 378L184 384L203 387L215 405L238 421L300 400L385 397L411 388L420 410L57 418L56 449L130 405L163 440L192 445L220 445L252 455L295 429L390 440L430 470L53 482L110 475L150 465L180 512L216 480L242 500L275 506L290 485L304 475L335 495L366 520L380 545L405 540L430 535L455 520L480 475L513 470L525 475L545 490L586 480L114 505L127 510L168 545L190 560L205 545L262 558L285 548L320 550L346 585L330 590L380 575L395 590L440 600L455 600L505 590L520 575L540 570L560 560L585 600L60 590L90 580L122 555L147 573L155 600L170 600L95 625L125 625L160 655L180 650L200 610L252 617L260 660L300 610L310 655L340 660L375 650L392 640L455 645L480 650L520 650L530 640L545 660L555 645L110 670L150 668L172 680L210 670L240 675L255 690L300 695L310 710L350 705L350 665L410 690L470 700L535 700L550 710L575 700L58 740L80 750L118 685L155 755L180 755L188 765L235 720L240 765L285 735L325 765L345 755L375 720L385 735L420 700L445 740L452 755L515 765L540 750L547 770L570 765L585 760L58 810L75 803L90 785L125 790L150 800L175 790L215 780L225 775L235 840L290 800L320 800L380 765L400 770L435 775L460 800L500 770L490 785L520 820L540 810L565 800L588 800L59 828L85 848L160 832L180 830L225 865L255 865L300 845L305 815L400 840L405 820L455 855L480 850L500 850L530 845L545 830L590 845L130 875L0 0"/>
                        <path class="dots" marker-mid="url(#dot2)" d="M0 0L63 124L125 93L134 128L180 115L185 145L213 115L270 120L290 105L300 130L325 125L356 90L379 160L415 150L453 112L506 90L534 108L545 135L155 175L132 150L215 150L230 178L252 152L287 165L352 150L385 160L440 205L55 222L60 248L160 230L171 231L200 215L290 215L303 215L316 218L353 230L358 238L135 260L98 271L113 277L195 260L280 250L336 262L110 250L98 310L60 300L96 290L138 313L146 313L200 327L277 318L310 315L389 332L396 332L407 340L330 360L343 360L75 410L60 408L110 385L142 387L250 375L245 370L243 385L196 416L233 444L270 452L287 435L330 423L338 424L366 417L370 395L443 385L65 460L135 452L150 462L262 447L236 448L355 470L363 460L90 480L60 512L100 482L155 480L180 500L229 475L225 496L240 488L250 495L292 515L310 480L318 500L345 485L385 480L475 465L497 465L545 500L550 510L560 540L583 510L463 528L463 548L465 565L497 530L545 565L575 550L580 585L60 567L95 610L110 605L120 570L183 545L203 555L240 553L256 558L282 555L330 575L343 570L375 600L405 590L432 590L455 590L485 580L525 600L545 595L55 607L85 640L103 635L130 660L195 650L192 670L205 643L238 610L268 605L318 615L350 630L340 640L405 625L430 620L530 625L540 637L117 620L92 665L100 690L145 667L166 668L235 665L250 675L265 705L295 660L306 662L350 690L338 700L400 670L408 705L412 650L445 660L455 670L540 690L550 665L530 655L575 655L55 700L90 735L110 752L60 765L75 758L110 783L120 788L155 790L185 755L195 767L190 780L243 772L238 725L240 735L290 765L320 740L330 750L340 745L370 745L378 755L420 775L450 700L442 725L460 765L510 710L535 735L555 700L535 765L545 765L560 755L586 755L80 795L103 800L120 810L164 790L170 800L185 790L198 800L228 787L250 830L295 790L305 800L325 810L380 785L405 795L455 790L463 830L487 840L500 800L515 830L530 800L560 780L580 800L65 835L75 810L86 834L58 853L165 845L190 840L175 830L120 855L130 855L250 845L300 840L315 870L385 820L400 850L480 860L500 830L540 845L550 845L590 860L0 0"/>
                        <path class="dots" marker-mid="url(#dot3)" d="M0 0L146 132L420 107L535 92L583 92L453 98L127 172L216 222L180 220L297 230L377 208L150 252L192 260L269 251L315 330L378 325L141 388L180 393L195 377L203 434L313 425L112 455L281 345L436 400L450 340L58 395L237 508L242 528L286 510L345 493L508 538L562 480L532 485L568 558L475 580L456 573L330 560L405 580L550 573L255 558L100 635L85 695L201 645L488 615L545 637L340 633L445 675L240 708L130 665L418 670L260 845L230 785L480 830L420 790L300 818L87 820L210 780L270 750L535 725L180 730L503 832L555 842L180 825L115 845L335 735L0 0"/>
                    </g>
                    <pattern id="tile" width="540" height="790" patternUnits="userSpaceOnUse">
                        <g transform="translate(-50 -86)">
                            <use href="#doodles"/>
                            <use href="#doodles" x="-540"/>
                        </g>
                    </pattern>
                </defs>
                <rect width="100%" height="100%" fill="url(#tile)"/>
            </svg>

            <!-- shared message icons -->
            <svg class="sprites" aria-hidden="true">
                <symbol id="ticks" viewBox="0 0 16 11"><path fill="none" stroke="#53bdeb" stroke-width="1.500" d="M1 6l3 3.500L11 1M6 7.500l2 2L15.500 1"/></symbol>
                <symbol id="tail" viewBox="0 0 8 13"><path fill="currentColor" d="M0 0h6q2 0 .8 1.800L0 11z"/></symbol>
                <symbol id="thumb" viewBox="0 0 18 18">
                    <path fill="#ffc022" d="M9.500 1q2-.8 2.300 1.600L11.400 7h4q1.500.4 1 2 .8 1.300-.3 2.300.5 1.400-.7 2.200.2 1.300-1.100 1.800-3 .9-7 .4L1.500 14V9l4-1.500Q8.700 4.500 9.500 1z"/>
                    <path fill="#f2921c" d="M1.500 9l3-1v7.200l-3-1.200zM9.800 15.900q2.800.2 4.600-.4 1.200-.6 1-2l-4.700.1.800-.5 4.800-.3q.8-.9.200-1.500l-5.200.1.600-.5 4.600-.2q.7-.9 0-1.600L10 9.300q-.8 3.500-.2 6.600z"/>
                    <path fill="#e77c13" d="M4.300 15.100q3.500 1.600 8.500.8l-1 .5q-4 .6-7.500-.5z"/>
                </symbol>
            </svg>

            <div class="messages">
                <div class="message in">
                    <div class="quote you cut"></div>
                    <p dir="rtl">يعني أكيد إن حصر المعماري مش متوفر؟ صح؟</p>
                    <div class="meta">12:22 pm</div>
                </div>

                <div class="message out first reacted">
                    <svg class="tail"><use href="#tail"/></svg>
                    <p dir="rtl">غالبا متوفر حصر علي الريفيت انشائي و انا أيضا هتأكد من الدكتور وهبلغ حضرتك وبضيف لحضرتك المحاضرات ايضا</p>
                    <div class="meta">12:24 pm <svg class="ticks"><use href="#ticks"/></svg></div>
                    <button class="reaction" aria-label="Thumbs up"><svg width="18" height="18"><use href="#thumb"/></svg></button>
                </div>

                <div class="message out">
                    <p dir="rtl">مساء الخير</p>
                    <div class="meta">4:03 pm <svg class="ticks"><use href="#ticks"/></svg></div>
                </div>

                <div class="message out">
                    <div class="quote contact">
                        <strong>RD23-CLIEN1728</strong>
                        <span>I7 قديم موديل ٢٠١٤م</span>
                        <span>8 GB ram</span>
                        <span>2 GB كارت شاشة...</span>
                    </div>
                    <p dir="rtl">تشغل اوتوكاد وريفيت وساب وايتابس وسيف وبراميفرا و نافيس ورك تمام</p>
                    <div class="meta">4:03 pm <svg class="ticks"><use href="#ticks"/></svg></div>
                </div>

                <div class="message in first reacted">
                    <svg class="tail"><use href="#tail"/></svg>
                    <div class="quote you">
                        <strong>You</strong>
                        <span>تشغل اوتوكاد وريفيت وساب وايتابس وسيف وبراميفرا و نافيس ورك تمام</span>
                    </div>
                    <p dir="rtl">مساء النور<br><br>طيب تمام</p>
                    <div class="meta">4:17 pm</div>
                    <button class="reaction" aria-label="Thumbs up"><svg width="18" height="18"><use href="#thumb"/></svg></button>
                </div>

                <div class="message out first">
                    <svg class="tail"><use href="#tail"/></svg>
                    <p dir="rtl">هنتظر من حضرتك موعد للتسطيب ان شاء الله</p>
                    <div class="meta">4:29 pm <svg class="ticks"><use href="#ticks"/></svg></div>
                </div>

                <div class="message in first reacted">
                    <svg class="tail"><use href="#tail"/></svg>
                    <div class="quote you">
                        <strong>You</strong>
                        <span>هنتظر من حضرتك موعد للتسطيب ان شاء الله</span>
                    </div>
                    <p dir="rtl">نعم ان شاء الله</p>
                    <div class="meta">4:47 pm</div>
                    <button class="reaction" aria-label="Thumbs up"><svg width="18" height="18"><use href="#thumb"/></svg></button>
                </div>
            </div>
            <div class="scrollbar chat-scrollbar"><i class="arrow-up"></i><i class="thumb"></i><i class="arrow-down"></i></div>
        </section>

        <footer class="composer">
            <button class="icon-button" aria-label="Emoji">
                <svg width="26" height="26" viewBox="0 0 26 26">
                    <circle cx="13" cy="13" r="11" fill="none" stroke="currentColor" stroke-width="2"/>
                    <ellipse cx="9.500" cy="10" rx="1.500" ry="2" fill="currentColor"/><ellipse cx="16.500" cy="10" rx="1.500" ry="2" fill="currentColor"/>
                    <path fill="currentColor" d="M6 13.500q7 1.600 14 0-.8 6-7 6t-7-6z"/><path stroke="#f0f2f5" stroke-width="1.200" d="M8 16q5 1 10 0" fill="none"/>
                </svg>
            </button>
            <button class="icon-button" aria-label="Attach">
                <svg width="24" height="24" viewBox="0 0 24 24"><path stroke="currentColor" stroke-width="2" d="M12 3v18M3 12h18"/></svg>
            </button>
            <div class="text-box">
                <i class="caret"></i>
                <input type="text" placeholder="Type a message" aria-label="Type a message">
            </div>
            <button class="icon-button" aria-label="Voice message">
                <svg width="24" height="24" viewBox="0 0 24 24"><rect x="8" y="1" width="8" height="14" rx="4" fill="currentColor"/><path fill="none" stroke="currentColor" stroke-width="2" d="M5 11.500q.5 6.500 7 6.500t7-6.500M12 18v5"/></svg>
            </button>
        </footer>
    </main>
</div>

<div class="taskbar"><i></i></div>
</body>
</html>
```
FILE: styles.css
```
* {
    box-sizing: border-box;
}

body {
    margin: 0;
    height: 100vh;
    display: flex;
    flex-direction: column;
    overflow: hidden;
    position: relative;
    font-family: "Open Sans", "DejaVu Sans", sans-serif;
    color: #111b21;
    background: linear-gradient(#e6e3df 134px, #d1d7db);
}

h1, p {
    margin: 0;
    font-weight: normal;
}

/* page background */
.top-strip {
    height: 7px;
    background: #fff;
    border-bottom: 1px solid #a5dccf;
}

.green-band {
    position: absolute;
    top: 7px;
    left: 0;
    right: 0;
    height: 127px;
    background: #00a884;
}

.taskbar {
    height: 1px;
    margin-top: 19px;
    background: #3b3f43;
}

.taskbar i {
    display: block;
    height: 1px;
    width: 48px;
    margin-left: 638px;
    background: #d98c3a;
}

.app {
    position: relative;
    flex: 1;
    min-height: 0;
    display: flex;
    margin: 19px 110px 0 0;
    background: #f0f2f5;
    box-shadow: 0 6px 18px rgba(11, 20, 26, 0.08);
}

.icon-button {
    display: flex;
    align-items: center;
    justify-content: center;
    width: 24px;
    height: 24px;
    padding: 0;
    border: 0;
    background: none;
    color: #54656f;
    flex-shrink: 0;
}

/* chat list */
.sidebar {
    width: 50px;
    display: flex;
    flex-direction: column;
    overflow: hidden;
    background: #fff;
    border-right: 1px solid #e9edef;
}

.sidebar-header {
    height: 60px;
    display: flex;
    align-items: center;
    justify-content: flex-end;
    padding-right: 28px;
}

.sidebar-search {
    height: 48px;
    display: flex;
    align-items: center;
    gap: 9px;
    border-bottom: 1px solid #e9edef;
    box-shadow: 0 1px 2px rgba(11, 20, 26, 0.08);
}

.search-box {
    width: 7px;
    height: 34px;
    padding: 0;
    border: 0;
    border-radius: 0 8px 8px 0;
    background: #f0f2f5;
}

.filter {
    color: #8696a0;
}

.chat-list {
    flex: 1;
    min-height: 0;
    position: relative;
    overflow: hidden;
}

.chat-row {
    height: 72px;
    width: 38px;
    display: flex;
    flex-direction: column;
    align-items: flex-end;
    gap: 3px;
    padding: 18px 15px 0 0;
    border-bottom: 1px solid #e9edef;
    font-size: 12px;
    line-height: 18px;
    color: #667781;
}

.chat-row.selected {
    background: #f0f2f5;
}

.chip {
    padding: 0 6px;
    font-size: 11px;
    background: #e9edef;
    color: #54656f;
}

/* chat */
.chat {
    flex: 1;
    min-width: 0;
    display: flex;
    flex-direction: column;
}

.chat-header {
    height: 60px;
    display: flex;
    align-items: center;
    gap: 26px;
    padding: 0 24px 0 15px;
}

.chat-header h1 {
    flex: 1;
    margin-left: -11px;
    font-size: 15px;
    line-height: 21px;
}

.conversation {
    flex: 1;
    min-height: 0;
    position: relative;
    overflow: hidden;
    display: flex;
    flex-direction: column;
    justify-content: flex-end;
    background: #7acba5;
}

.wallpaper {
    position: absolute;
    inset: 0;
}

.wallpaper g {
    fill: none;
    stroke: #91d7b3;
    stroke-width: 1.3;
    stroke-linejoin: round;
    stroke-linecap: round;
}

.wallpaper .dots {
    stroke: none;
}

.ring {
    fill: none;
    stroke: #91d7b3;
    stroke-width: 1.3;
}

.wallpaper text {
    font-family: "DejaVu Sans", sans-serif;
    font-weight: bold;
    font-size: 18px;
    stroke-width: 1;
}

.wallpaper .big {
    font-size: 24px;
}

.wallpaper .small {
    font-size: 12px;
}

.sprites {
    position: absolute;
    width: 0;
    height: 0;
}

.messages {
    position: relative;
    display: flex;
    flex-direction: column;
    padding: 0 74px 20px 63px;
    font-size: 14px;
    line-height: 19px;
}

.message {
    position: relative;
    max-width: 65%;
    margin-top: 2px;
    padding: 6px 7px 2px 9px;
    border-radius: 8px;
    box-shadow: 0 1px 1px rgba(11, 20, 26, 0.13);
}

.message.in {
    align-self: flex-start;
    background: #fff;
    color: #fff;
}

.message.out {
    align-self: flex-end;
    background: #d9fdd3;
    color: #d9fdd3;
}

.message.first {
    margin-top: 12px;
}

.message.in.first {
    border-top-left-radius: 0;
}

.message.out.first {
    border-top-right-radius: 0;
}

.message.reacted {
    margin-bottom: 26px;
}

.message p {
    color: #111b21;
}

.tail {
    position: absolute;
    top: 0;
    right: -8px;
    width: 8px;
    height: 13px;
}

.in .tail {
    right: auto;
    left: -8px;
    transform: scaleX(-1);
}

.quote {
    display: flex;
    flex-direction: column;
    margin: -3px -4px 7px -6px;
    padding: 4px 70px 7px 8px;
    border-left: 4px solid #06cf9c;
    border-radius: 6px;
    background: #f5f6f6;
    font-size: 13px;
    line-height: 20px;
    color: #667781;
}

.quote strong {
    font-size: 12px;
    font-weight: 600;
    line-height: 22px;
    color: #06cf9c;
}

.quote.contact {
    padding-right: 8px;
    border-color: #53bdeb;
    background: #d1f4cc;
}

.quote.contact strong {
    color: #53bdeb;
}

.quote.cut {
    height: 32px;
}

.meta {
    display: flex;
    align-items: center;
    justify-content: flex-end;
    gap: 4px;
    margin-top: 9px;
    font-size: 11px;
    line-height: 16px;
    color: #667781;
}

.ticks {
    width: 16px;
    height: 11px;
}

.reaction {
    position: absolute;
    right: 8px;
    bottom: -22px;
    width: 30px;
    height: 26px;
    display: flex;
    align-items: center;
    justify-content: center;
    padding: 0;
    border: 0;
    border-radius: 13px;
    background: #fff;
    box-shadow: 0 1px 1px rgba(11, 20, 26, 0.1);
}

.in .reaction {
    right: auto;
    left: 8px;
}

/* scrollbars drawn over the panes */
.scrollbar {
    position: absolute;
    top: 0;
    bottom: 0;
    right: 2px;
    width: 7px;
    display: flex;
    flex-direction: column;
    align-items: center;
    padding: 5px 0;
}

.scrollbar .thumb {
    width: 7px;
    background: rgba(11, 20, 26, 0.2);
}

.list-scrollbar .thumb {
    height: 98px;
    margin: 3px 0 auto;
}

.chat-scrollbar .thumb {
    height: 170px;
    margin: auto 0 4px;
}

.arrow-up, .arrow-down {
    border: 3px solid transparent;
    border-top-width: 0;
    border-bottom: 3px solid #a9b0b5;
}

.arrow-down {
    transform: rotate(180deg);
}

.chat-scrollbar .arrow-up, .chat-scrollbar .arrow-down {
    border-bottom-color: #5b9a80;
}

/* message box */
.composer {
    height: 66px;
    display: flex;
    align-items: center;
    gap: 20px;
    padding: 0 24px 0 25px;
}

.text-box {
    flex: 1;
    display: flex;
    align-items: center;
    height: 42px;
    margin: 4px -4px 0 -1px;
    padding: 0 13px;
    border-radius: 8px;
    background: #fff;
}

.text-box input {
    flex: 1;
    min-width: 0;
    border: 0;
    outline: 0;
    padding: 2px 0 0 3px;
    font: 14px/20px "Open Sans", sans-serif;
    color: #111b21;
    background: none;
}

.text-box input::placeholder {
    color: #667781;
}

.caret {
    width: 1px;
    height: 20px;
    background: #111b21;
}
```
